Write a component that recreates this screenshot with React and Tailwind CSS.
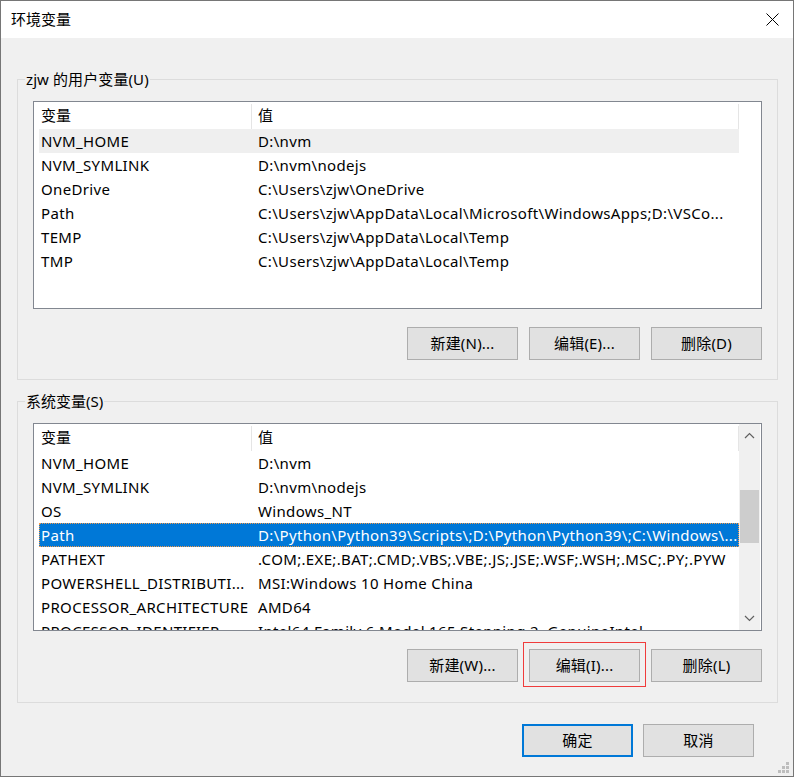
import React from "react";

const userVars = [
  ["NVM_HOME", "D:\\nvm"],
  ["NVM_SYMLINK", "D:\\nvm\\nodejs"],
  ["OneDrive", "C:\\Users\\zjw\\OneDrive"],
  ["Path", "C:\\Users\\zjw\\AppData\\Local\\Microsoft\\WindowsApps;D:\\VSCo..."],
  ["TEMP", "C:\\Users\\zjw\\AppData\\Local\\Temp"],
  ["TMP", "C:\\Users\\zjw\\AppData\\Local\\Temp"],
];

const systemVars = [
  ["NVM_HOME", "D:\\nvm"],
  ["NVM_SYMLINK", "D:\\nvm\\nodejs"],
  ["OS", "Windows_NT"],
  ["Path", "D:\\Python\\Python39\\Scripts\\;D:\\Python\\Python39\\;C:\\Windows\\..."],
  ["PATHEXT", ".COM;.EXE;.BAT;.CMD;.VBS;.VBE;.JS;.JSE;.WSF;.WSH;.MSC;.PY;.PYW"],
  ["POWERSHELL_DISTRIBUTI...", "MSI:Windows 10 Home China"],
  ["PROCESSOR_ARCHITECTURE", "AMD64"],
  ["PROCESSOR_IDENTIFIER", "Intel64 Family 6 Model 165 Stepping 2, GenuineIntel"],
];

function Chevron({ up }) {
  return (
    <svg width="11" height="7" viewBox="0 0 11 7">
      <path
        d={up ? "M1 6 L5.5 1.5 L10 6" : "M1 1 L5.5 5.5 L10 1"}
        fill="none"
        stroke="#606060"
        strokeWidth="1.2"
      />
    </svg>
  );
}

function Scrollbar() {
  return (
    <div className="w-[21px] h-full bg-[#f0f0f0] flex flex-col">
      <div className="h-[23px] flex items-center justify-center">
        <Chevron up />
      </div>
      <div className="mt-[43px] mx-px h-[53px] bg-[#cdcdcd]" />
      <div className="flex-1" />
      <div className="h-[23px] flex items-center justify-center">
        <Chevron />
      </div>
    </div>
  );
}

function VarList({ rows, hover, selected, scroll }) {
  return (
    <div className="ml-2 h-[208px] w-[729px] border border-[#828790] bg-white flex overflow-hidden">
      <div className="w-[705px] shrink-0 flex flex-col">
        {/* header */}
        <div className="h-[27px] shrink-0 flex">
          <div className="w-[217px] pl-[7px] leading-[27px]">变量</div>
          <div className="w-px mt-[2px] bg-[#e5e5e5]" />
          <div className="w-[486px] pl-[6px] leading-[27px]">值</div>
          <div className="w-px mt-[2px] bg-[#e5e5e5]" />
        </div>
        <div className="ml-[5px] w-[700px] flex flex-col tracking-[0.34px]">
          {rows.map(([name, value], i) => (
            <div
              key={name}
              className={
                "h-[24px] shrink-0 flex leading-[22px] whitespace-nowrap overflow-hidden border border-dotted " +
                (i === selected
                  ? "bg-[#0078d7] text-white border-[#f39a4a]"
                  : i === hover
                  ? "bg-[#efefef] border-transparent"
                  : "border-transparent")
              }
            >
              <div className="w-[212px] shrink-0 pl-px overflow-hidden">{name}</div>
              <div className="flex-1 pl-[6px] overflow-hidden">{value}</div>
            </div>
          ))}
        </div>
      </div>
      <div className="flex-1 flex">{scroll && <Scrollbar />}</div>
    </div>
  );
}

function Btn({ children, primary }) {
  return (
    <button
      className={
        "w-[111px] h-[33px] bg-[#e1e1e1] text-black tracking-[0.2px] " +
        (primary ? "border-2 border-[#0078d7]" : "border border-[#adadad]")
      }
    >
      {children}
    </button>
  );
}

export default function App() {
  return (
    <div className="w-[794px] h-[777px] border border-[#767676] bg-[#f0f0f0] flex flex-col text-[15px] text-black font-['Noto_Sans','Noto_Sans_CJK_SC',sans-serif] relative">
      {/* title bar */}
      <div className="h-[37px] shrink-0 bg-white flex items-center justify-between pl-[10px] pr-[14px]">
        <span>环境变量</span>
        <svg width="13" height="13" viewBox="0 0 13 13">
          <path d="M0.5 0.5 L12.5 12.5 M12.5 0.5 L0.5 12.5" stroke="#000" strokeWidth="1" />
        </svg>
      </div>

      <div className="flex-1 pl-[16px] pt-[31px] flex flex-col">
        <fieldset className="w-[761px] border border-[#dcdcdc] pl-[7px] pb-[19px]">
          <legend className="px-px leading-[20px] tracking-[0.1px]">zjw 的用户变量(U)</legend>
          <div className="mt-[12px]">
            <VarList rows={userVars} hover={0} />
          </div>
          <div className="mt-[18px] ml-2 w-[729px] flex justify-end gap-[11px]">
            <Btn>新建(N)...</Btn>
            <Btn>编辑(E)...</Btn>
            <Btn>删除(D)</Btn>
          </div>
        </fieldset>

        <fieldset className="mt-[11px] w-[761px] border border-[#dcdcdc] pl-[7px] pb-[20px]">
          <legend className="px-px leading-[20px]">系统变量(S)</legend>
          <div className="mt-[12px]">
            <VarList rows={systemVars} selected={3} scroll />
          </div>
          <div className="mt-[18px] ml-2 w-[729px] flex justify-end gap-[11px]">
            <Btn>新建(W)...</Btn>
            <div className="relative">
              <Btn>编辑(I)...</Btn>
              <span className="absolute -left-[6px] -right-[6px] -top-[7px] -bottom-[5px] border border-[#f03c3c] pointer-events-none" />
            </div>
            <Btn>删除(L)</Btn>
          </div>
        </fieldset>

        <div className="mt-[21px] w-[737px] flex justify-end gap-[10px]">
          <Btn primary>确定</Btn>
          <Btn>取消</Btn>
        </div>
      </div>

      {/* resize grip */}
      <svg className="absolute right-[3px] bottom-[2px]" width="12" height="12" viewBox="0 0 12 12">
        <g fill="#bdbdbd">
          <rect x="8" y="0" width="3" height="3" />
          <rect x="4" y="4" width="3" height="3" />
          <rect x="8" y="4" width="3" height="3" />
          <rect x="0" y="8" width="3" height="3" />
          <rect x="4" y="8" width="3" height="3" />
          <rect x="8" y="8" width="3" height="3" />
        </g>
      </svg>
    </div>
  );
}
